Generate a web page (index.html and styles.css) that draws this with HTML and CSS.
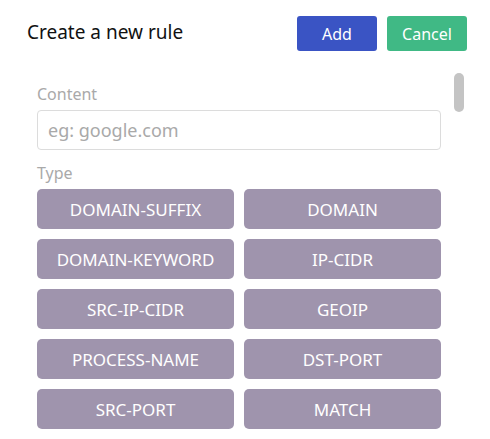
FILE: index.html
```html
<!DOCTYPE html>
<html>
<head>
<meta charset="utf-8">
<link rel="stylesheet" href="styles.css">
</head>
<body>
<div class="dialog">
  <div class="header">
    <div class="title">Create a new rule</div>
    <div class="actions">
      <button class="btn btn-add">Add</button>
      <button class="btn btn-cancel">Cancel</button>
    </div>
  </div>
  <div class="body">
    <div class="content">
      <div class="label">Content</div>
      <input class="input" type="text" placeholder="eg: google.com">
      <div class="label label-type">Type</div>
      <div class="types">
        <button class="type">DOMAIN-SUFFIX</button>
        <button class="type">DOMAIN</button>
        <button class="type">DOMAIN-KEYWORD</button>
        <button class="type">IP-CIDR</button>
        <button class="type">SRC-IP-CIDR</button>
        <button class="type">GEOIP</button>
        <button class="type">PROCESS-NAME</button>
        <button class="type">DST-PORT</button>
        <button class="type">SRC-PORT</button>
        <button class="type">MATCH</button>
      </div>
    </div>
    <div class="thumb"></div>
  </div>
</div>
</body>
</html>
```

FILE: styles.css
```css
* { box-sizing: border-box; }
html, body { margin: 0; padding: 0; background: #fff; }
body {
  width: 490px;
  height: 439px;
  overflow: hidden;
  font-family: "Noto Sans", "Open Sans", sans-serif;
}
.dialog {
  padding: 16px 23px 0 27px;
}
.header {
  display: flex;
  align-items: center;
  justify-content: space-between;
  height: 35px;
}
.title {
  font-size: 19px;
  color: #111;
  margin-top: -3px;
}
.actions {
  display: flex;
  gap: 10px;
}
.btn {
  width: 80px;
  height: 35px;
  border: none;
  border-radius: 3px;
  color: #fff;
  font-family: "Noto Sans", sans-serif;
  font-size: 16px;
  padding: 0;
}
.btn-add { background: #3a54c4; }
.btn-cancel { background: #40b985; }
.body {
  position: relative;
  margin-top: 22px;
  padding: 0 26px 0 10px;
}
.content {
  display: flex;
  flex-direction: column;
}
.label {
  font-size: 16px;
  line-height: 24px;
  color: #a9a9a9;
  margin-top: 9px;
  margin-bottom: 4px;
}
.label-type {
  margin-top: 11px;
  margin-bottom: 4px;
}
.input {
  height: 40px;
  border: 1px solid #dcdcdc;
  border-radius: 4px;
  padding: 0 10px;
  font-family: "Noto Sans", sans-serif;
  font-size: 18px;
  outline: none;
}
.input::placeholder { color: #a9a9a9; }
.types {
  display: grid;
  grid-template-columns: 1fr 1fr;
  gap: 10px 10px;
}
.type {
  height: 40px;
  border: none;
  border-radius: 5px;
  background: #9f94ad;
  color: #fff;
  font-family: "Noto Sans", sans-serif;
  font-size: 17px;
  padding: 0;
}
.thumb {
  position: absolute;
  top: 0;
  right: 3px;
  width: 10px;
  height: 39px;
  border-radius: 5px;
  background: #c4c4c4;
}
```
